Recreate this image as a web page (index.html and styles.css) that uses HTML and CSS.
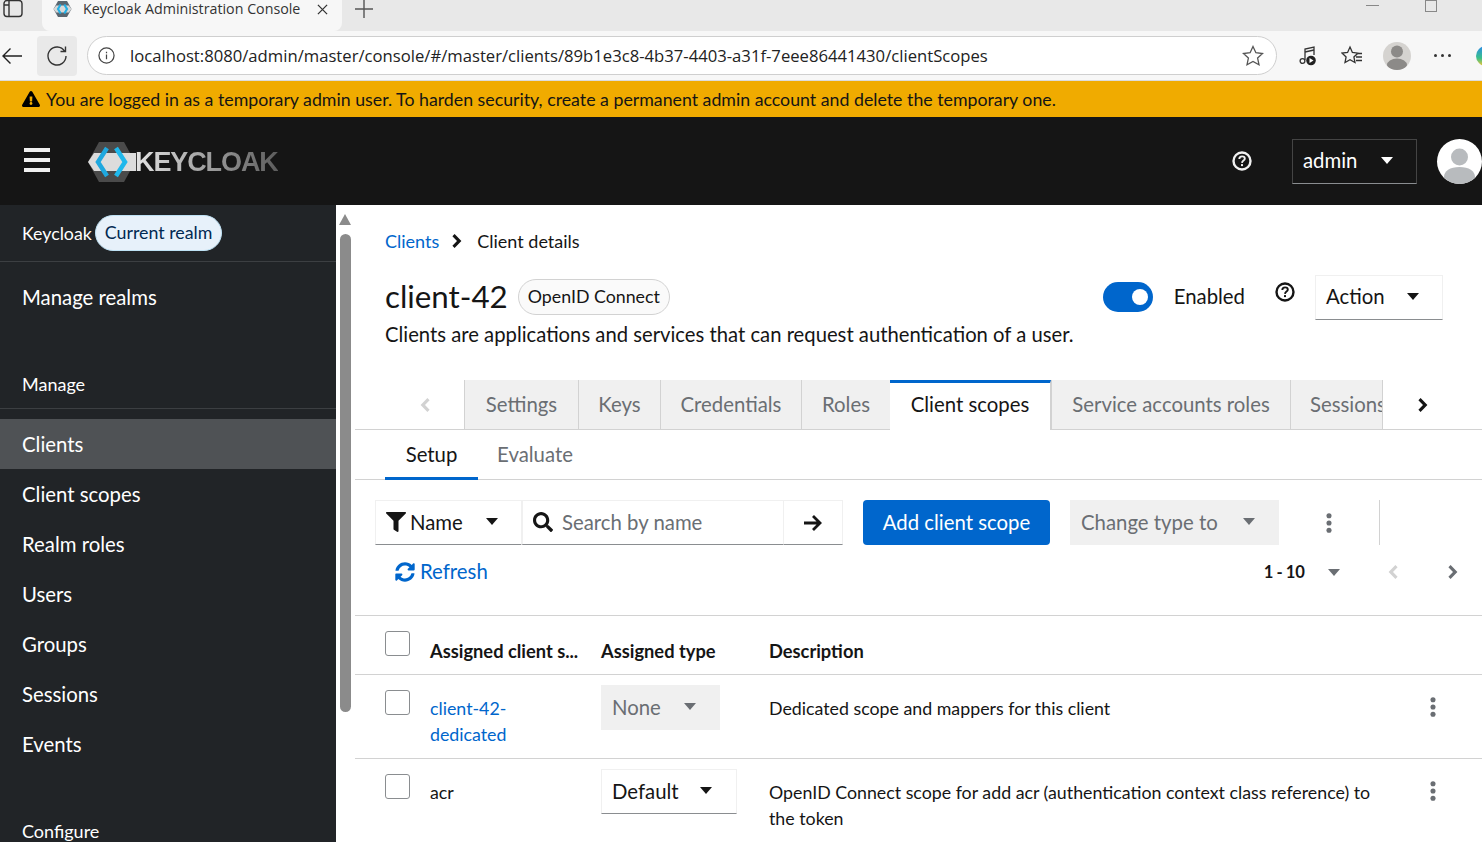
FILE: index.html
```html
<!DOCTYPE html>
<html lang="en">

<head>
  <meta charset="UTF-8" />
  <title>Keycloak Administration Console</title>
  <link rel="stylesheet" href="styles.css">
</head>

<body>
  <svg class="sprite" xmlns="http://www.w3.org/2000/svg">
    <symbol id="i-caret" viewBox="0 0 14 8"><path d="M0 0h14L7 8z" /></symbol>
    <symbol id="i-kebab" viewBox="0 0 6 22"><circle cx="3" cy="3" r="2.8" /><circle cx="3" cy="11" r="2.8" /><circle cx="3" cy="19" r="2.8" /></symbol>
    <symbol id="i-right" viewBox="0 0 10 14"><path d="M2.6 0 9.4 7l-6.8 7L.4 11.8 5 7 .4 2.2z" /></symbol>
    <symbol id="i-left" viewBox="0 0 10 14"><path d="M7.4 0 .6 7l6.8 7 2.2-2.2L5 7l4.6-4.8z" /></symbol>
    <symbol id="i-help" viewBox="0 0 20 20">
      <circle cx="10" cy="10" r="8.5" fill="none" stroke="currentColor" stroke-width="2.4" />
      <path d="M7.3 8c0-1.600 1.200-2.600 2.800-2.600s2.700.9 2.700 2.300c0 1.900-2.700 1.900-2.800 4.200" fill="none" stroke="currentColor" stroke-width="1.900" />
      <rect x="9" y="13.100" width="2" height="2" fill="currentColor" />
    </symbol>
  </svg>

  <div class="browser">
    <div class="tabstrip">
      <svg class="win-icon" viewBox="0 0 22 20"><rect x="2" y="0.500" width="18" height="16" rx="3" /><path d="M7 0.500v16M2 5h5" /></svg>
      <div class="browser-tab">
        <svg class="favicon" viewBox="0 0 20 20">
          <path d="M5 1h10l5 9-5 9H5l-5-9z" fill="#5a6670" />
          <path d="M0 10l3-4h14l3 4-3 4H3z" fill="#d8d8d8" />
          <path d="M8 5 5 10l3 5M12 5l3 5-3 5" fill="none" stroke="#22b0e6" stroke-width="2.400" />
        </svg>
        <span class="browser-tab-title">Keycloak Administration Console</span>
        <svg class="tab-close" viewBox="0 0 12 12"><path d="M1 1l10 10M11 1 1 11" /></svg>
      </div>
      <svg class="new-tab" viewBox="0 0 18 18"><path d="M9 0v18M0 9h18" /></svg>
      <div class="win-controls">
        <span class="win-min"></span>
        <span class="win-max"></span>
      </div>
    </div>
    <div class="browser-bar">
      <svg class="nav-back" viewBox="0 0 22 18"><path d="M21 9H2M9.500 1.500 2 9l7.500 7.500" /></svg>
      <div class="nav-reload">
        <svg viewBox="0 0 22 22"><path d="M18.600 6.200A9 9 0 1 0 20 11M19.500 1.500v5h-5" /></svg>
      </div>
      <div class="address">
        <svg class="addr-info" viewBox="0 0 18 18"><circle cx="9" cy="9" r="8" /><path d="M9 8v5M9 5v1.600" /></svg>
        <span class="addr-url">localhost:8080/admin/master/console/#/master/clients/89b1e3c8-4b37-4403-a31f-7eee86441430/clientScopes</span>
        <svg class="addr-star" viewBox="0 0 22 22"><path d="M11 1.500l2.900 6.200 6.700.8-5 4.600 1.400 6.700L11 16.500l-6 3.300 1.400-6.700-5-4.600 6.700-.8z" /></svg>
      </div>
      <svg class="bar-icon bar-media" viewBox="0 0 18 22">
        <path d="M6 15V4l9-2v8" fill="none" />
        <path d="M6 7l9-2" fill="none" />
        <circle cx="3.500" cy="16" r="2.400" fill="none" />
        <circle cx="12" cy="15.500" r="4.800" fill="#222" stroke="none" />
        <path d="M10.500 13l4 2.500-4 2.500z" fill="#fff" stroke="none" />
      </svg>
      <svg class="bar-icon bar-favs" viewBox="0 0 22 22"><path d="M9 2l2.400 5.400 5.600.7-4.100 3.800 1.100 5.600L9 14.700l-5 2.800 1.100-5.600L1 8.100l5.600-.7zM15 8.500h6M15 12h6M15 15.500h6" fill="none" /></svg>
      <div class="profile">
        <svg viewBox="0 0 28 28"><circle cx="14" cy="9.500" r="6" /><ellipse cx="14" cy="23" rx="10" ry="6.500" /></svg>
      </div>
      <div class="bar-dots"><i></i><i></i><i></i></div>
      <span class="copilot"></span>
    </div>
  </div>

  <div class="banner">
    <svg class="banner-icon" viewBox="0 0 576 512"><path d="M569.517 440.013C587.975 472.007 564.806 512 527.94 512H48.054c-36.937 0-59.999-40.055-41.577-71.987L246.423 24.035c18.467-32.009 64.72-31.951 83.154 0l239.94 416.078zM288 354c-25.405 0-46 20.595-46 46s20.595 46 46 46 46-20.595 46-46-20.595-46-46-46zm-43.673-165.346l7.418 136c.347 6.364 5.609 11.346 11.982 11.346h48.546c6.373 0 11.635-4.982 11.982-11.346l7.418-136c.375-6.874-5.098-12.654-11.982-12.654h-63.383c-6.884 0-12.356 5.78-11.981 12.654z" /></svg>
    <span>You are logged in as a temporary admin user. To harden security, create a permanent admin account and delete the temporary one.</span>
  </div>

  <header class="masthead">
    <div class="burger"><i></i><i></i><i></i></div>
    <div class="logo">
      <svg class="logo-mark" viewBox="0 0 48 40">
        <path d="M11 0h25l11 20-11 20H11L0 20z" fill="#4a4a4a" />
        <path d="M0 20l6-9h42v18H6z" fill="#dcdcdc" />
        <path d="M19 6 10 20l9 14" fill="none" stroke="#1fa8df" stroke-width="4.500" />
        <path d="M28 6l9 14-9 14" fill="none" stroke="#1fb8ec" stroke-width="4.500" />
      </svg>
      <span class="logo-text">KEYCLOAK</span>
    </div>
    <svg class="mast-help"><use href="#i-help" /></svg>
    <div class="user-menu">
      <span>admin</span>
      <svg class="caret"><use href="#i-caret" /></svg>
    </div>
    <div class="avatar">
      <svg viewBox="0 0 45 45"><circle cx="22.500" cy="18" r="8.500" /><path d="M7 45v-7c0-6 6-10 15.500-10S38 32 38 38v7z" /></svg>
    </div>
  </header>

  <div class="layout">
    <nav class="sidebar">
      <div class="realm">
        <span>Keycloak</span>
        <span class="realm-badge">Current realm</span>
      </div>
      <a class="nav-item nav-realms">Manage realms</a>
      <div class="nav-group">Manage</div>
      <a class="nav-item active">Clients</a>
      <a class="nav-item">Client scopes</a>
      <a class="nav-item">Realm roles</a>
      <a class="nav-item">Users</a>
      <a class="nav-item">Groups</a>
      <a class="nav-item">Sessions</a>
      <a class="nav-item">Events</a>
      <div class="nav-group nav-configure">Configure</div>
    </nav>

    <div class="scrollbar">
      <span class="scroll-up"></span>
      <span class="scroll-thumb"></span>
    </div>

    <main class="content">
      <div class="crumbs">
        <a class="link">Clients</a>
        <svg class="crumb-sep"><use href="#i-right" /></svg>
        <span>Client details</span>
      </div>

      <div class="title-row">
        <h1>client-42</h1>
        <span class="protocol">OpenID Connect</span>
        <div class="title-actions">
          <span class="switch"><i></i></span>
          <span class="switch-label">Enabled</span>
          <svg class="title-help"><use href="#i-help" /></svg>
          <div class="action-select">
            <span>Action</span>
            <svg class="caret"><use href="#i-caret" /></svg>
          </div>
        </div>
      </div>
      <p class="subtitle">Clients are applications and services that can request authentication of a user.</p>

      <div class="tabs">
        <span class="tab-scroll"><svg class="chev off"><use href="#i-left" /></svg></span>
        <span class="tab tab-settings">Settings</span>
        <span class="tab tab-keys">Keys</span>
        <span class="tab tab-creds">Credentials</span>
        <span class="tab tab-roles">Roles</span>
        <span class="tab tab-current">Client scopes</span>
        <span class="tab tab-service">Service accounts roles</span>
        <span class="tab tab-sessions">Sessions</span>
        <span class="tab-scroll tab-scroll-right"><svg class="chev"><use href="#i-right" /></svg></span>
      </div>

      <div class="subtabs">
        <span class="subtab current">Setup</span>
        <span class="subtab">Evaluate</span>
      </div>

      <div class="toolbar">
        <div class="filter-select">
          <svg class="filter-icon" viewBox="0 0 512 512"><path d="M487.976 0H24.028C2.71 0-8.047 25.866 7.058 40.971L192 225.941V432c0 7.831 3.821 15.17 10.237 19.662l80 55.98C298.02 518.69 320 507.493 320 487.98V225.941l184.947-184.97C520.021 25.896 509.338 0 487.976 0z" /></svg>
          <span>Name</span>
          <svg class="caret"><use href="#i-caret" /></svg>
        </div>
        <div class="search">
          <svg class="search-icon" viewBox="0 0 512 512"><path d="M505 442.7L405.3 343c-4.500-4.500-10.600-7-17-7H372c27.600-35.300 44-79.700 44-128C416 93.100 322.900 0 208 0S0 93.100 0 208s93.100 208 208 208c48.300 0 92.700-16.400 128-44v16.300c0 6.400 2.500 12.500 7 17l99.700 99.700c9.400 9.400 24.600 9.400 33.900 0l28.300-28.300c9.400-9.400 9.400-24.600.1-34zM208 336c-70.700 0-128-57.200-128-128 0-70.700 57.200-128 128-128 70.700 0 128 57.200 128 128 0 70.700-57.200 128-128 128z" /></svg>
          <span>Search by name</span>
        </div>
        <div class="search-go">
          <svg viewBox="0 0 20 18"><path d="M1 9h16M10 2l7 7-7 7" /></svg>
        </div>
        <button class="btn-primary">Add client scope</button>
        <div class="type-select">
          <span>Change type to</span>
          <svg class="caret"><use href="#i-caret" /></svg>
        </div>
        <svg class="kebab kebab-toolbar"><use href="#i-kebab" /></svg>
        <span class="toolbar-divider"></span>
      </div>

      <div class="refresh-row">
        <a class="link refresh">
          <svg viewBox="0 0 512 512"><path d="M370.72 133.28C339.458 104.008 298.888 87.962 255.848 88c-77.458.068-144.328 53.178-162.791 126.85-1.344 5.363-6.122 9.15-11.651 9.15H24.103c-7.498 0-13.194-6.807-11.807-14.176C33.933 94.924 134.813 8 256 8c66.448 0 126.791 26.136 171.315 68.685L463.03 40.97C478.149 25.851 504 36.559 504 57.941V192c0 13.255-10.745 24-24 24H345.941c-21.382 0-32.090-25.851-16.971-40.971l41.750-41.749zM32 296h134.059c21.382 0 32.090 25.851 16.971 40.971l-41.750 41.750c31.262 29.273 71.835 45.319 114.876 45.280 77.418-.070 144.315-53.144 162.787-126.849 1.344-5.363 6.122-9.150 11.651-9.150h57.304c7.498 0 13.194 6.807 11.807 14.176C478.067 417.076 377.187 504 256 504c-66.448 0-126.791-26.136-171.315-68.685L48.970 471.030C33.851 486.149 8 475.441 8 454.059V320c0-13.255 10.745-24 24-24z" /></svg>
          <span>Refresh</span>
        </a>
        <div class="pager">
          <strong>1 - 10</strong>
          <svg class="caret gray"><use href="#i-caret" /></svg>
          <svg class="chev off pager-prev"><use href="#i-left" /></svg>
          <svg class="chev gray pager-next"><use href="#i-right" /></svg>
        </div>
      </div>

      <div class="table">
        <div class="row head">
          <span class="check"></span>
          <span>Assigned client s...</span>
          <span>Assigned type</span>
          <span>Description</span>
          <span></span>
        </div>
        <div class="row">
          <span class="check"></span>
          <a class="link cell">client-42-<br>dedicated</a>
          <div class="cell-select disabled">
            <span>None</span>
            <svg class="caret"><use href="#i-caret" /></svg>
          </div>
          <span class="cell">Dedicated scope and mappers for this client</span>
          <svg class="kebab"><use href="#i-kebab" /></svg>
        </div>
        <div class="row">
          <span class="check"></span>
          <span class="cell">acr</span>
          <div class="cell-select">
            <span>Default</span>
            <svg class="caret"><use href="#i-caret" /></svg>
          </div>
          <span class="cell">OpenID Connect scope for add acr (authentication context class reference) to the token</span>
          <svg class="kebab"><use href="#i-kebab" /></svg>
        </div>
      </div>
    </main>
  </div>
</body>

</html>
```
FILE: styles.css
```css
* {
  box-sizing: border-box;
}

html,
body {
  margin: 0;
  height: 842px;
  overflow: hidden;
}

body {
  font-family: "Lato", "Noto Sans", sans-serif;
  font-size: 20.35px;
  color: #151515;
  background: #fff;
}

.sprite {
  display: none;
}

.link {
  color: #0066cc;
}

.caret {
  width: 12px;
  height: 7px;
  fill: #151515;
  flex: none;
}

.caret.gray {
  fill: #6a6e73;
}

.chev {
  width: 10px;
  height: 14px;
  fill: #151515;
}

.chev.off {
  fill: #d2d2d2;
}

.chev.gray {
  fill: #6a6e73;
}

/* browser chrome */
.browser {
  height: 81px;
  background: #f7f7f7;
  border-bottom: 1px solid #dcdcdc;
  font-family: "Open Sans", "Noto Sans", sans-serif;
}

.tabstrip {
  height: 31px;
  background: #e8e8e8;
  display: flex;
  align-items: flex-start;
  overflow: hidden;
}

.win-icon {
  width: 22px;
  height: 20px;
  margin: 0 0 0 2px;
  fill: none;
  stroke: #333;
  stroke-width: 1.4;
  flex: none;
}

.browser-tab {
  width: 300px;
  height: 31px;
  margin-left: 18px;
  background: #f7f7f7;
  border-radius: 0 0 8px 8px;
  display: flex;
  align-items: flex-start;
  padding-left: 11px;
}

.favicon {
  width: 19px;
  height: 18px;
  flex: none;
}

.browser-tab-title {
  margin-left: 11px;
  font-size: 14.25px;
  line-height: 18px;
  color: #333;
  width: 223px;
  white-space: nowrap;
}

.tab-close {
  width: 11px;
  height: 11px;
  margin: 4px 0 0 11px;
  stroke: #333;
  stroke-width: 1.4;
  flex: none;
}

.new-tab {
  width: 18px;
  height: 18px;
  margin-left: 13px;
  stroke: #555;
  stroke-width: 1.4;
  flex: none;
}

.win-controls {
  margin-left: auto;
  display: flex;
  align-items: flex-start;
}

.win-min {
  width: 13px;
  height: 1px;
  background: #888;
  margin: 5px 46px 0 0;
}

.win-max {
  width: 12px;
  height: 12px;
  border: 1px solid #888;
  margin: 0 45px 0 0;
}

.browser-bar {
  height: 49px;
  display: flex;
  align-items: center;
}

.nav-back {
  width: 22px;
  height: 18px;
  margin-left: 1px;
  fill: none;
  stroke: #222;
  stroke-width: 1.4;
  flex: none;
}

.nav-reload {
  width: 40px;
  height: 40px;
  margin-left: 14px;
  background: #e9e9e9;
  border-radius: 4px;
  display: flex;
  align-items: center;
  justify-content: center;
  flex: none;
}

.nav-reload svg {
  width: 22px;
  height: 22px;
  fill: none;
  stroke: #333;
  stroke-width: 1.4;
}

.address {
  width: 1190px;
  height: 39px;
  margin-left: 10px;
  background: #fff;
  border: 1px solid #cfcfcf;
  border-radius: 20px;
  display: flex;
  align-items: center;
  padding: 0 12px 0 10px;
  flex: none;
}

.addr-info {
  width: 17px;
  height: 17px;
  fill: none;
  stroke: #444;
  stroke-width: 1.3;
  flex: none;
}

.addr-url {
  margin-left: 15px;
  font-size: 16.67px;
  color: #222;
  white-space: nowrap;
}

.addr-star {
  width: 22px;
  height: 22px;
  margin-left: auto;
  fill: none;
  stroke: #555;
  stroke-width: 1.3;
  flex: none;
}

.bar-icon {
  fill: none;
  stroke: #333;
  stroke-width: 1.3;
  flex: none;
}

.bar-media {
  width: 18px;
  height: 22px;
  margin-left: 22px;
}

.bar-favs {
  width: 22px;
  height: 22px;
  margin-left: 24px;
}

.profile {
  width: 28px;
  height: 28px;
  margin-left: 20px;
  border-radius: 50%;
  background: #d5d3d0;
  overflow: hidden;
  flex: none;
}

.profile svg {
  display: block;
  fill: #8c8a88;
}

.bar-dots {
  display: flex;
  gap: 4px;
  margin-left: 23px;
  flex: none;
}

.bar-dots i {
  width: 3px;
  height: 3px;
  border-radius: 50%;
  background: #333;
}

.copilot {
  width: 14px;
  height: 20px;
  margin-left: 25px;
  border-radius: 10px 0 0 10px;
  background: linear-gradient(#2b8be8, #39c08a 60%, #f4c430);
  flex: none;
}

/* warning banner */
.banner {
  height: 36px;
  background: #f0ab00;
  display: flex;
  align-items: center;
  padding: 0 0 1px 22px;
  font-size: 17.76px;
  white-space: nowrap;
}

.banner-icon {
  width: 18px;
  height: 16px;
  margin-right: 6px;
  flex: none;
}

/* masthead */
.masthead {
  height: 88px;
  background: #151515;
  display: flex;
  align-items: center;
  color: #fff;
}

.burger {
  width: 26px;
  margin: 0 0 2px 24px;
  display: flex;
  flex-direction: column;
  gap: 6px;
  flex: none;
}

.burger i {
  height: 4px;
  background: #f0f0f0;
}

.logo {
  display: flex;
  align-items: center;
  margin: 2px 0 0 38px;
  width: 191px;
  flex: none;
}

.logo-mark {
  width: 48px;
  height: 40px;
  flex: none;
}

.logo-text {
  font-family: "Liberation Sans", sans-serif;
  font-weight: 700;
  font-size: 27px;
  letter-spacing: -1.1px;
  margin-left: -1px;
  background: linear-gradient(to right, #e4e4e4, #5c5c5c);
  background-clip: text;
  -webkit-background-clip: text;
  color: transparent;
}

.mast-help {
  width: 20px;
  height: 20px;
  margin-left: auto;
  color: #f0f0f0;
  flex: none;
}

.user-menu {
  width: 125px;
  height: 45px;
  margin-left: 40px;
  border: 1px solid #444;
  border-bottom-color: #8a8d90;
  display: flex;
  align-items: center;
  padding: 0 0 2px 10px;
  flex: none;
}

.user-menu .caret {
  margin-left: auto;
  margin-right: 23px;
  fill: #fff;
}

.avatar {
  width: 45px;
  height: 45px;
  margin-left: 20px;
  background: #fff;
  border-radius: 50%;
  overflow: hidden;
  flex: none;
}

.avatar svg {
  display: block;
  fill: #b8bbbe;
}

/* sidebar and page */
.layout {
  display: flex;
  height: 637px;
}

.sidebar {
  width: 336px;
  background: #212427;
  color: #fff;
  flex: none;
  overflow: hidden;
}

.realm {
  height: 57px;
  display: flex;
  align-items: center;
  padding-left: 22px;
  gap: 3px;
  font-size: 17.8px;
  border-bottom: 1px solid #3c3f42;
}

.realm-badge {
  height: 36px;
  padding: 0 9px 2px;
  display: flex;
  align-items: center;
  background: #e7f1fa;
  border: 1px solid #bee1f4;
  border-radius: 18px;
  color: #002952;
}

.nav-item {
  display: flex;
  align-items: center;
  height: 50px;
  padding: 0 0 1px 22px;
}

.nav-item.active {
  background: #4f5255;
}

.nav-realms {
  margin-top: 10px;
}

.nav-group {
  height: 55px;
  margin-top: 32px;
  padding: 17px 0 0 22px;
  font-size: 18px;
  line-height: 26px;
  border-bottom: 1px solid #3c3f42;
  margin-bottom: 10px;
}

.nav-group.nav-configure {
  margin-top: 49px;
  border-bottom: 0;
  padding-top: 0;
}

.scrollbar {
  width: 19px;
  flex: none;
  position: relative;
}

.scroll-up {
  position: absolute;
  left: 3px;
  top: 9px;
  border: 6px solid transparent;
  border-top: 0;
  border-bottom: 11px solid #8b8b8b;
}

.scroll-thumb {
  position: absolute;
  left: 4px;
  top: 29px;
  width: 11px;
  height: 478px;
  border-radius: 6px;
  background: #8b8b8b;
}

.content {
  flex: 1;
  min-width: 0;
  overflow: hidden;
}

.crumbs {
  display: flex;
  align-items: center;
  height: 26px;
  margin: 23px 0 0 30px;
  font-size: 18px;
  padding-bottom: 1px;
}

.crumb-sep {
  width: 10px;
  height: 14px;
  margin: 0 15px 0 13px;
  fill: #151515;
}

.title-row {
  display: flex;
  align-items: center;
  height: 46px;
  margin: 20px 39px 0 30px;
}

h1 {
  margin: 0;
  font-size: 31.3px;
  font-weight: 400;
  padding-bottom: 2px;
}

.protocol {
  margin-left: 10px;
  height: 36px;
  padding: 0 9px 2px;
  display: flex;
  align-items: center;
  border: 1px solid #d2d2d2;
  border-radius: 18px;
  font-size: 17.8px;
  color: #151515;
  background: #fafafa;
}

.title-actions {
  margin-left: auto;
  display: flex;
  align-items: center;
}

.switch {
  width: 50px;
  height: 30px;
  margin-right: 1px;
  background: #0066cc;
  border-radius: 15px;
  position: relative;
}

.switch i {
  position: absolute;
  right: 5px;
  top: 7px;
  width: 16px;
  height: 16px;
  background: #fff;
  border-radius: 50%;
}

.switch-label {
  margin-left: 20px;
  padding-bottom: 2px;
}

.title-help {
  width: 20px;
  height: 20px;
  margin: -10px 0 0 30px;
  color: #151515;
}

.action-select {
  width: 128px;
  height: 45px;
  margin-left: 20px;
  display: flex;
  align-items: center;
  justify-content: space-between;
  padding: 0 23px 2px 10px;
  border: 1px solid #f0f0f0;
  border-bottom-color: #8a8d90;
}

.subtitle {
  margin: 0 0 0 30px;
  height: 60px;
  line-height: 28px;
  font-size: 20.26px;
}

.tabs {
  display: flex;
  height: 50px;
  border-bottom: 1px solid #d2d2d2;
  padding-left: 30px;
  white-space: nowrap;
}

.tab {
  display: flex;
  align-items: center;
  justify-content: center;
  height: 49px;
  padding-bottom: 2px;
  background: #f0f0f0;
  color: #6a6e73;
  border-left: 1px solid #d2d2d2;
  overflow: hidden;
  flex: none;
}

.tab-settings {
  width: 114px;
}

.tab-keys {
  width: 82px;
}

.tab-creds {
  width: 141px;
}

.tab-roles {
  width: 89px;
}

.tab-service {
  width: 239px;
}

.tab-sessions {
  width: 93px;
  justify-content: flex-start;
  padding-left: 19px;
  border-right: 1px solid #d2d2d2;
}

.tab-current {
  width: 161px;
  height: 50px;
  background: #fff;
  color: #151515;
  border-top: 3px solid #0066cc;
  border-left: 0;
  border-right: 1px solid #d2d2d2;
  padding-bottom: 5px;
}

.tab-scroll {
  width: 79px;
  display: flex;
  align-items: center;
  justify-content: center;
  flex: none;
}

.tab-scroll-right {
  width: 80px;
}

.subtabs {
  display: flex;
  height: 50px;
  padding-left: 30px;
  border-bottom: 1px solid #d2d2d2;
}

.subtab {
  display: flex;
  align-items: center;
  justify-content: center;
  width: 93px;
  height: 50px;
  color: #6a6e73;
  padding-bottom: 2px;
}

.subtab.current {
  color: #151515;
  border-bottom: 3px solid #0066cc;
  padding-bottom: 0;
}

.subtab + .subtab {
  width: 114px;
}

.toolbar {
  display: flex;
  align-items: stretch;
  height: 45px;
  margin: 20px 0 0 20px;
}

.filter-select,
.search,
.search-go {
  display: flex;
  align-items: center;
  border: 1px solid #f0f0f0;
  border-bottom-color: #8a8d90;
  border-right: 0;
}

.filter-select {
  width: 146px;
  padding: 0 0 2px 10px;
}

.filter-select .caret {
  margin-left: 23px;
}

.filter-icon {
  width: 20px;
  height: 20px;
  margin-right: 4px;
  fill: #151515;
}

.search {
  width: 262px;
  padding: 0 0 2px 10px;
  color: #6a6e73;
  border-left: 2px solid #f0f0f0;
}

.search-icon {
  width: 20px;
  height: 20px;
  margin-right: 9px;
  fill: #151515;
}

.search-go {
  width: 60px;
  justify-content: center;
  border-left: 1px solid #f0f0f0;
  border-right: 1px solid #f0f0f0;
}

.search-go svg {
  width: 20px;
  height: 18px;
  fill: none;
  stroke: #151515;
  stroke-width: 2.800;
}

.btn-primary {
  width: 187px;
  margin-left: 20px;
  padding: 0 0 2px;
  border: 0;
  border-radius: 4px;
  background: #0066cc;
  color: #fff;
  font: inherit;
}

.type-select {
  width: 209px;
  margin-left: 20px;
  background: #f0f0f0;
  color: #6a6e73;
  display: flex;
  align-items: center;
  justify-content: space-between;
  padding: 0 24px 2px 11px;
}

.type-select .caret {
  fill: #6a6e73;
}

.kebab {
  width: 6px;
  height: 20px;
  fill: #6a6e73;
}

.kebab-toolbar {
  align-self: center;
  margin-left: 47px;
}

.toolbar-divider {
  width: 1px;
  background: #d2d2d2;
  margin-left: 47px;
}

.refresh-row {
  display: flex;
  align-items: center;
  height: 54px;
  padding: 0 24px 0 40px;
}

.refresh {
  display: flex;
  align-items: center;
  gap: 5px;
}

.refresh span {
  padding-bottom: 2px;
}

.refresh svg {
  width: 20px;
  height: 20px;
  fill: #0066cc;
}

.pager {
  margin-left: auto;
  display: flex;
  align-items: center;
  font-size: 16.6px;
}

.pager strong {
  font-weight: 700;
  word-spacing: -1px;
  padding-bottom: 1px;
}

.pager .caret {
  margin-left: 23px;
}

.pager-prev {
  margin-left: 48px;
}

.pager-next {
  margin-left: 50px;
}

.table {
  margin-top: 16px;
  border-top: 1px solid #d2d2d2;
  font-size: 17.8px;
}

.row {
  display: grid;
  grid-template-columns: 45px 171px 168px 620px 1fr;
  align-items: start;
  padding: 10px 0 11px 30px;
  line-height: 26px;
  border-bottom: 1px solid #d2d2d2;
}

.row.head {
  height: 59px;
  font-size: 18.3px;
  font-weight: 700;
  align-items: end;
  padding: 0 0 10px 30px;
}

.row.head .check {
  align-self: start;
  margin-top: 15px;
}

.check {
  width: 25px;
  height: 25px;
  margin-top: 5px;
  border: 1px solid #8a8d90;
  border-radius: 3px;
  background: #fff;
}

.cell {
  margin-top: 10px;
}

.cell-select {
  width: 136px;
  height: 45px;
  display: flex;
  align-items: center;
  justify-content: space-between;
  padding: 0 24px 2px 10px;
  font-size: 20.35px;
  border: 1px solid #f0f0f0;
  border-bottom-color: #8a8d90;
}

.cell-select.disabled {
  width: 119px;
  background: #f0f0f0;
  border: 0;
  padding-left: 11px;
  color: #6a6e73;
}

.cell-select.disabled .caret {
  fill: #6a6e73;
}

.row .kebab {
  justify-self: start;
  margin: 12px 0 0 41px;
}
```
